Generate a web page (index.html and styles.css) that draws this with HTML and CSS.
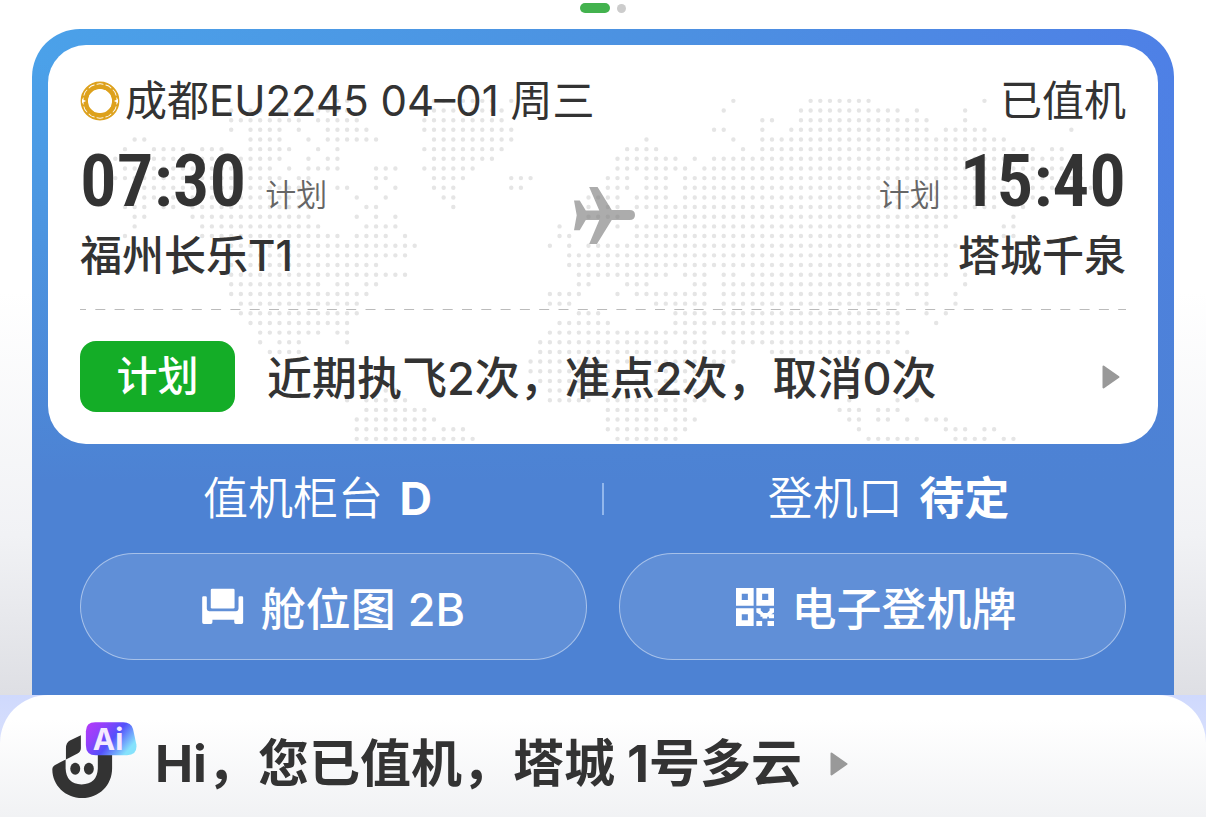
FILE: index.html
```html
<!DOCTYPE html>
<html lang="zh-CN">
<head>
<meta charset="utf-8">
<meta name="viewport" content="width=device-width, initial-scale=1">
<title>航班行程</title>
<link rel="stylesheet" href="styles.css">
</head>
<body>
<main class="trip">
  <div class="pager"><span class="pager-dot pager-dot-active"></span><span class="pager-dot"></span></div>
  <section class="panel">
    <article class="card">
      <svg class="world" viewBox="-6.97 -5.8 114.94 41.35" preserveAspectRatio="xMidYMid slice" aria-hidden="true"><path id="world-dots"/></svg>
      <header class="card-head">
        <svg class="airline-logo" viewBox="0 0 40 40" aria-hidden="true">
          <circle cx="20" cy="20" r="15.7" fill="none" stroke="#dda11c" stroke-width="7.4"/>
          <g fill="none" stroke="#fff" stroke-width="1.1" stroke-linecap="round">
            <g id="ray"><path d="M19 8.500q5 .5 7.500 4.500"/><path d="M17 3.200q3-1.200 6 0" stroke-width=".9"/></g>
            <use href="#ray" transform="rotate(30 20 20)"/><use href="#ray" transform="rotate(60 20 20)"/>
            <use href="#ray" transform="rotate(90 20 20)"/><use href="#ray" transform="rotate(120 20 20)"/>
            <use href="#ray" transform="rotate(150 20 20)"/><use href="#ray" transform="rotate(180 20 20)"/>
            <use href="#ray" transform="rotate(210 20 20)"/><use href="#ray" transform="rotate(240 20 20)"/>
            <use href="#ray" transform="rotate(270 20 20)"/><use href="#ray" transform="rotate(300 20 20)"/>
            <use href="#ray" transform="rotate(330 20 20)"/>
          </g>
          <path fill="#fff" d="M2 18l4 2-4 2ZM38 18l-4 2 4 2Z"/>
        </svg>
        <h1 class="flight-no">成都EU2245 04–01 周三</h1>
        <span class="status">已值机</span>
      </header>
      <div class="route">
        <div class="stop">
          <div class="stop-time"><time class="clock">07:30</time><span class="kind">计划</span></div>
          <div class="airport">福州长乐T1</div>
        </div>
        <svg class="plane" viewBox="45 55 181 169" aria-hidden="true"><path d="M45 95H62L80 125H120L90 55H115L157 123H210Q226 123 226 138Q226 153 210 153H157L113 224H90L120 153H80L62 183H45L53 139Z"/></svg>
        <div class="stop stop-end">
          <div class="stop-time"><span class="kind">计划</span><time class="clock">15:40</time></div>
          <div class="airport">塔城千泉</div>
        </div>
      </div>
      <svg class="divider" aria-hidden="true"><line x1="0" y1=".5" x2="100%" y2=".5"/></svg>
      <a class="record" href="#record">
        <span class="tag">计划</span>
        <span class="record-text">近期执飞2次，准点2次，取消0次</span>
        <svg class="arrow" viewBox="0 0 18 24" aria-hidden="true"><path d="M1.500 1.500L16.500 12L1.500 22.500Z"/></svg>
      </a>
    </article>
    <div class="facts">
      <div class="fact fact-counter">值机柜台 <b class="fact-value">D</b></div>
      <div class="fact fact-gate">登机口 <b class="fact-value">待定</b></div>
    </div>
    <div class="actions">
      <button class="action" type="button">
        <svg class="seat-icon" viewBox="67 90 126 112" aria-hidden="true">
          <rect x="93" y="92" width="72" height="60" rx="4"/>
          <path d="M67 119q0-4 4-4h6q4 0 4 4v34q0 7 7 7h82q7 0 7-7v-34q0-4 4-4h6q4 0 4 4v75q0 5-5 5h-17q-5 0-5-5v-8H98v8q0 5-5 5H72q-5 0-5-5Z"/>
        </svg>
        <span>舱位图 2B</span>
      </button>
      <button class="action action-pass" type="button">
        <svg class="qr-icon" viewBox="110 82 112 112" aria-hidden="true">
          <path fill-rule="evenodd" d="M110 82h52v52h-52ZM127 99v18h18v-18ZM170 82h52v52h-52ZM187 99v18h18v-18ZM110 142h52v52h-52ZM127 159v18h18v-18Z"/>
          <path d="M170 142h13v6l8 8h11l7-8v-6h13v12l-8 5h8v12h-15v-4h-5v5h-14v-5h-6v-6l-12-7ZM170 179h17v15h-17ZM203 179h19v15h-19Z"/>
        </svg>
        <span>电子登机牌</span>
      </button>
    </div>
  </section>
</main>
<footer class="assistant">
  <a class="assistant-bar" href="#assistant">
    <svg class="mascot" viewBox="156 126 256 230" aria-hidden="true">
      <defs>
        <linearGradient id="badge" x1="0" y1="0" x2="1" y2=".55">
          <stop offset="0" stop-color="#b63af8"/><stop offset=".3" stop-color="#9440fb"/><stop offset=".62" stop-color="#5350fb"/><stop offset="1" stop-color="#85e2fc"/>
        </linearGradient>
      </defs>
      <path class="mascot-body" d="M198 238V204Q198 188 210 181L243 165V204Q243 214 233 220ZM157 268Q156 260 164 255L197 238V265Q199 312 245 313Q292 312 294 265V215H337V265C337 315 298 354 247 354S157 315 157 268Z"/>
      <ellipse class="mascot-body" cx="226" cy="266" rx="15" ry="18"/>
      <ellipse class="mascot-body" cx="267" cy="266" rx="15" ry="18"/>
      <path fill="url(#badge)" d="M286 126H371Q394 126 400 146L410 192Q414 225 382 225H288Q258 225 258 194V154Q258 126 286 126Z"/>
      <text class="mascot-label" x="279" y="209">Ai</text>
    </svg>
    <span class="greeting">Hi，您已值机，塔城 1号多云</span>
    <svg class="arrow" viewBox="0 0 18 24" aria-hidden="true"><path d="M1.500 1.500L16.500 12L1.500 22.500Z"/></svg>
  </a>
</footer>
<script src="script.js"></script>
</body>
</html>
```
FILE: styles.css
```css
* { box-sizing: border-box; }
body {
  margin: 0;
  min-height: 100vh;
  display: flex;
  flex-direction: column;
  font-family: Inter, "Noto Sans CJK SC", sans-serif;
  color: #333;
  background: #fff;
}
a { color: inherit; text-decoration: none; }
.trip {
  padding: 3px 32px 0;
  background: linear-gradient(#fff 42%, #f1f2f5 77%, #dedfe4);
}
.pager { display: flex; justify-content: center; align-items: center; gap: 7px; height: 10px; }
.pager-dot { width: 9px; height: 9px; border-radius: 5px; background: #ccc; }
.pager-dot-active { width: 30px; height: 10px; background: #43b24e; }

.panel {
  margin-top: 16px;
  padding: 16px 16px 35px;
  border-radius: 48px 48px 0 0;
  background:
    linear-gradient(rgba(77, 130, 211, 0) 5%, #4d82d3 68%),
    linear-gradient(90deg, #4ba1e9, #4c91e1 55%, #4e80e6);
}
.card {
  position: relative;
  overflow: hidden;
  padding: 32px;
  border-radius: 38px;
  background: #fff;
}
.world { position: absolute; inset: 0; width: 100%; height: 100%; }
.world path {
  fill: none;
  stroke: #e5e5e5;
  stroke-width: .46;
  stroke-linecap: round;
  stroke-dasharray: 0 1;
}
.card-head, .route, .divider, .record { position: relative; }
.card-head { display: flex; align-items: center; height: 48px; font-size: 42px; line-height: 48px; }
.airline-logo { width: 40px; height: 40px; margin-right: 5px; }
.flight-no { margin: 0; font-size: 42px; font-weight: 400; }
.status { margin-left: auto; font-weight: 400; }

.route { display: grid; grid-template-columns: 1fr auto 1fr; align-items: center; margin-top: 20px; }
.stop-time { display: flex; align-items: baseline; gap: 19px; height: 87px; line-height: 72px; }
.stop-end { text-align: right; }
.stop-end .stop-time { justify-content: flex-end; }
.clock { font: 600 73px/72px "Roboto Condensed", "Liberation Sans Narrow", Roboto, sans-serif; }
.kind { font-size: 31px; font-weight: 350; color: #666; }
.airport { font-size: 42px; line-height: 48px; font-weight: 500; }
.plane { width: 61px; height: 57px; margin: 6px 0 0 2px; fill: #7c7c7c; fill-opacity: .63; }

.divider { display: block; width: 100%; height: 1px; margin-top: 29px; }
.divider line { stroke: #bbb; stroke-width: 1; stroke-dasharray: 10 9.3; stroke-dashoffset: 4; }
.record { display: flex; align-items: center; margin-top: 31px; }
.tag {
  width: 155px;
  border-radius: 16px;
  text-align: center;
  font-size: 41px;
  line-height: 71px;
  font-weight: 500;
  color: #fff;
  background: #14ad27;
}
.record-text { padding-top: 4px; margin-left: 32px; font-size: 45px; line-height: 64px; font-weight: 500; }
.arrow { width: 18px; height: 24px; fill: #999; stroke: #999; stroke-width: 2; stroke-linejoin: round; }
.record .arrow { margin: 0 6px 0 auto; }

.facts { display: grid; grid-template-columns: 1fr 1fr; height: 109px; align-items: center; color: #fff; }
.fact { position: relative; text-align: center; font-size: 45px; line-height: 64px; font-weight: 350; }
.fact-value { margin-left: 4px; font-weight: 700; }
.fact-counter { padding-right: 16px; }
.fact-gate { padding-left: 16px; }
.fact-gate::before {
  content: "";
  position: absolute;
  left: -1px;
  top: 16px;
  width: 2px;
  height: 32px;
  background: #92b7ec;
}
.actions { display: grid; grid-template-columns: 1fr 1fr; gap: 32px; padding: 0 32px; }
.action {
  display: flex;
  align-items: center;
  justify-content: center;
  gap: 17px;
  height: 107px;
  padding: 0 6px;
  border: 1px solid rgba(255, 255, 255, .45);
  border-radius: 54px;
  background: rgba(255, 255, 255, .11);
  color: #fff;
  font: inherit;
  font-size: 45px;
  font-weight: 500;
}
.action-pass { padding-left: 14px; }
.seat-icon { width: 42px; height: 37px; fill: #fff; }
.qr-icon { width: 38px; height: 38px; fill: #fff; }

.assistant { flex: 1; display: flex; background: linear-gradient(#cfd9fd, #e4e9fc); }
.assistant-bar {
  flex: 1;
  display: flex;
  align-items: center;
  padding: 32px 52px 16px;
  border-radius: 48px 48px 0 0;
  background: linear-gradient(#fff 20%, #f1f2f4);
}
.mascot { width: 85px; height: 77px; margin: -8px 0 0; }
.mascot-body { fill: #333; }
.mascot-label { font: 700 90px Inter, sans-serif; fill: #f4eaff; }
.greeting { margin-left: 18px; font-size: 51px; line-height: 72px; font-weight: 700; }
.assistant .arrow { margin-left: 28px; }
```
FILE: script.js
```js
// Column spans of the dotted world map, one string per row of dots.
const rows = [
  "20 22-24 31 33-39 41 64 72-78 90",
  "12 14-15 17-24 32-40 63 71-81 83 88",
  "12-19 21-25 32-40 67-68 71-84 88",
  "12 14-17 19 22-26 32-41 62-63 67 70-84 86-90 99",
  "2-3 14-17 20 22-27 33-41 55 64 67-92",
  "1 4-7 9-11 14-18 21 23 32-40 53-56 65 67-95 97-98",
  "0-11 13-17 20 22-23 33-39 52-58 60 62-98",
  "1-16 18 20-23 27-29 32-37 52-59 61-100",
  "0-17 19-20 27-28 33-36 41-43 51-53 55-57 59-100",
  "2-20 23-24 27 29 33-35 41-42 51-53 55-57 59-101",
  "2-21 25 28 34-35 49-52 54-57 59-91 95",
  "1-3 5-6 8-20 26-27 35 49 51-52 54-91 94",
  "2-3 8-20 25 27 29 49-52 56-87 93",
  "2 9-21 26-29 46 52 54-86 92-93",
  "1 9-23 25-28 30 46-47 54-85 92-93",
  "12-31 45 47 49-87",
  "12-30 47-86",
  "12-27 47-86",
  "12-30 48-57 59-61 63-64 66-86 88",
  "12-21 23-24 26-27 48-49 53-55 60-61 63-84 88",
  "12-26 45-48 52 54-61 63-81 83-84 87",
  "13-25 45-47 56-61 63-81 84 87",
  "13-25 48-50 58-61 63-81 84 86",
  "14-24 46-51 58-81 85",
  "15-21 23-24 45-58 59-61 63-82",
  "15 17-19 24 44-57 59-61 64-81",
  "16-19 44-61 62-64 68-80 82",
  "43-64 75-77",
  "43-61",
  "44-62",
  "28-29 45-62 76",
  "24 26-30 45-49 51-61 76 81 83",
  "26-32 51-59 75-77 79-81",
  "25-33 51-56 58-60 76-77 79-80 82 84-86",
  "25-32 34-36 51-56 57-59 77 86-88 90-91",
  "25-37 52-58 78-83 87-90 92-93"
];

const path = rows.map((row, y) => row.split(" ").map(span => {
  const [start, end = start] = span.split("-").map(Number);
  return `M${start} ${y}h${end - start + 0.1}`;
}).join("")).join("");

document.getElementById("world-dots").setAttribute("d", path);
```
